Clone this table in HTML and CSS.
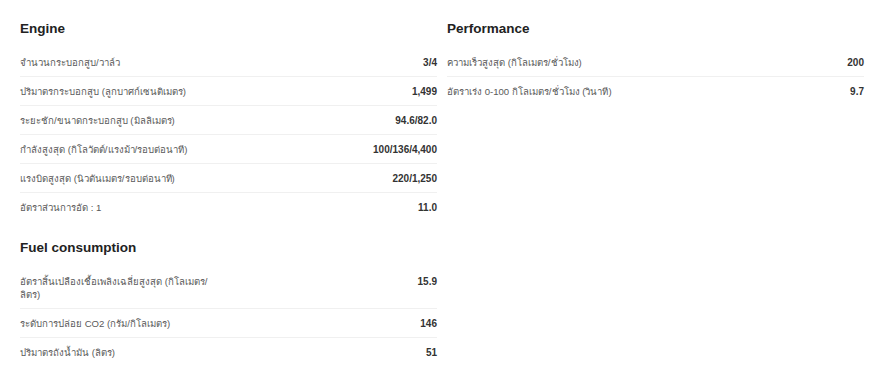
FILE: index.html
```html
<!DOCTYPE html>
<html lang="th">
<head>
<meta charset="utf-8">
<title>Specifications</title>
<link rel="stylesheet" href="styles.css">
</head>
<body>
<div class="specs">
  <div class="col">
    <section class="group">
      <h2 class="group-title">Engine</h2>
      <div class="row"><span class="label">จำนวนกระบอกสูบ/วาล์ว</span><span class="value">3/4</span></div>
      <div class="row"><span class="label">ปริมาตรกระบอกสูบ (ลูกบาศก์เซนติเมตร)</span><span class="value">1,499</span></div>
      <div class="row"><span class="label">ระยะชัก/ขนาดกระบอกสูบ (มิลลิเมตร)</span><span class="value">94.6/82.0</span></div>
      <div class="row"><span class="label">กำลังสูงสุด (กิโลวัตต์/แรงม้า/รอบต่อนาที)</span><span class="value">100/136/4,400</span></div>
      <div class="row"><span class="label">แรงบิดสูงสุด (นิวตันเมตร/รอบต่อนาที)</span><span class="value">220/1,250</span></div>
      <div class="row"><span class="label">อัตราส่วนการอัด : 1</span><span class="value">11.0</span></div>
    </section>
    <section class="group">
      <h2 class="group-title">Fuel consumption</h2>
      <div class="row"><span class="label">อัตราสิ้นเปลืองเชื้อเพลิงเฉลี่ยสูงสุด (กิโลเมตร/ลิตร)</span><span class="value">15.9</span></div>
      <div class="row"><span class="label">ระดับการปล่อย CO2 (กรัม/กิโลเมตร)</span><span class="value">146</span></div>
      <div class="row"><span class="label">ปริมาตรถังน้ำมัน (ลิตร)</span><span class="value">51</span></div>
    </section>
  </div>
  <div class="col">
    <section class="group">
      <h2 class="group-title">Performance</h2>
      <div class="row"><span class="label">ความเร็วสูงสุด (กิโลเมตร/ชั่วโมง)</span><span class="value">200</span></div>
      <div class="row"><span class="label">อัตราเร่ง 0-100 กิโลเมตร/ชั่วโมง (วินาที)</span><span class="value">9.7</span></div>
    </section>
  </div>
</div>
</body>
</html>
```
FILE: styles.css
```css
html, body {
  margin: 0;
  padding: 0;
  background: #ffffff;
}
body {
  font-family: "Liberation Sans", Arial, "Noto Sans", sans-serif;
  color: #333;
}
.specs {
  display: grid;
  grid-template-columns: 1fr 1fr;
  column-gap: 10px;
  padding: 21px 24px 0 20px;
  align-items: start;
}
.group {
  margin-bottom: 19px;
}
.group-title {
  margin: 0 0 11px 0;
  font-size: 13.5px;
  line-height: 16px;
  font-weight: bold;
  color: #222;
}
.row {
  display: flex;
  justify-content: space-between;
  align-items: flex-start;
  padding: 8px 0 7px 0;
  font-size: 10px;
  line-height: 13px;
  border-bottom: 1px solid #f0f0f0;
}
.row:last-child {
  border-bottom: none;
}
.label {
  color: #5a5a5a;
  font-size: 9.6px;
  max-width: 47%;
}
.value {
  font-weight: bold;
  color: #333;
  text-align: right;
}
```
